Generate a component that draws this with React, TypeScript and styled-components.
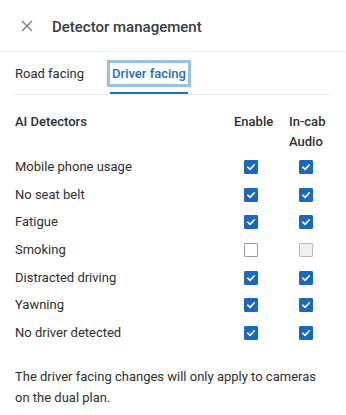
import React, { useState } from 'react';
import styled, { createGlobalStyle } from 'styled-components';

const GlobalStyle = createGlobalStyle`
  html, body {
    margin: 0;
    padding: 0;
    background: #ffffff;
  }
  body {
    font-family: Roboto, 'Liberation Sans', Arial, sans-serif;
    color: #2f2f2f;
    -webkit-font-smoothing: antialiased;
  }
`;

type Detector = {
  name: string;
  enable: boolean;
  audio: boolean;
  audioDisabled?: boolean;
};

const DETECTORS: Detector[] = [
  { name: 'Mobile phone usage', enable: true, audio: true },
  { name: 'No seat belt', enable: true, audio: true },
  { name: 'Fatigue', enable: true, audio: true },
  { name: 'Smoking', enable: false, audio: false, audioDisabled: true },
  { name: 'Distracted driving', enable: true, audio: true },
  { name: 'Yawning', enable: true, audio: true },
  { name: 'No driver detected', enable: true, audio: true },
];

const App = (): JSX.Element => {
  const [tab, setTab] = useState('driver');
  const [rows, setRows] = useState(DETECTORS);

  const toggle = (index: number, key: 'enable' | 'audio') => {
    setRows(
      rows.map((row, i) => (i === index ? { ...row, [key]: !row[key] } : row)),
    );
  };

  return (
    <>
      <GlobalStyle />
      <Panel>
        <Header>
          <CloseButton aria-label="Close">
            <svg width="12" height="12" viewBox="0 0 12 12">
              <path
                d="M1 1 L11 11 M11 1 L1 11"
                stroke="#7a7a7a"
                strokeWidth="1.3"
                fill="none"
              />
            </svg>
          </CloseButton>
          <Title>Detector management</Title>
        </Header>
        <Body>
          <TabList>
            <Tab active={tab === 'road'} onClick={() => setTab('road')}>
              <TabLabel>Road facing</TabLabel>
            </Tab>
            <Tab active={tab === 'driver'} onClick={() => setTab('driver')}>
              <TabLabel focused={tab === 'driver'}>Driver facing</TabLabel>
            </Tab>
          </TabList>

          <Table>
            <HeadCell>AI Detectors</HeadCell>
            <HeadCell>Enable</HeadCell>
            <HeadCell>In-cab Audio</HeadCell>
            {rows.map((row, i) => (
              <React.Fragment key={row.name}>
                <NameCell>{row.name}</NameCell>
                <BoxCell>
                  <Checkbox
                    checked={row.enable}
                    onClick={() => toggle(i, 'enable')}
                  >
                    {row.enable && <CheckMark />}
                  </Checkbox>
                </BoxCell>
                <BoxCell>
                  <Checkbox
                    checked={row.audio}
                    disabled={row.audioDisabled}
                    onClick={() => !row.audioDisabled && toggle(i, 'audio')}
                  >
                    {row.audio && <CheckMark />}
                  </Checkbox>
                </BoxCell>
              </React.Fragment>
            ))}
          </Table>

          <Note>
            The driver facing changes will only apply to cameras on the dual
            plan.
          </Note>
        </Body>
      </Panel>
    </>
  );
};

const CheckMark = () => (
  <svg width="10" height="10" viewBox="0 0 10 10">
    <path
      d="M1.8 5.2 L4.1 7.4 L8.3 2.8"
      stroke="#ffffff"
      strokeWidth="1.6"
      fill="none"
      strokeLinecap="round"
      strokeLinejoin="round"
    />
  </svg>
);

const Panel = styled.div`
  width: 346px;
  min-height: 415px;
  background: #ffffff;
`;

const Header = styled.div`
  display: flex;
  align-items: center;
  height: 52px;
  padding: 2px 0 0 21px;
  border-bottom: 1px solid #ececec;
  box-sizing: border-box;
`;

const CloseButton = styled.button`
  display: flex;
  align-items: center;
  justify-content: center;
  width: 12px;
  height: 12px;
  padding: 0;
  margin: 0 19px 1px 0;
  border: none;
  background: none;
  cursor: pointer;
`;

const Title = styled.h1`
  margin: 0;
  font-size: 15px;
  font-weight: 500;
  color: #3a3d42;
`;

const Body = styled.div`
  padding: 0 13px;
`;

const TabList = styled.div`
  display: flex;
  gap: 24px;
  border-bottom: 1px solid #ececec;
`;

const Tab = styled.button<{ active?: boolean }>`
  padding: 11px 0 8px;
  border: none;
  border-bottom: 2px solid ${(props) => (props.active ? '#1d6fc4' : 'transparent')};
  background: none;
  font-family: inherit;
  font-size: 13px;
  line-height: 21px;
  color: ${(props) => (props.active ? '#1d6fc4' : '#2f2f2f')};
  font-weight: ${(props) => (props.active ? 500 : 400)};
  cursor: pointer;
`;

const TabLabel = styled.span<{ focused?: boolean }>`
  display: block;
  padding: 0 2px;
  outline: ${(props) => (props.focused ? '3px solid #94c2ea' : 'none')};
`;

const Table = styled.div`
  display: grid;
  grid-template-columns: 1fr 38px 38px;
  grid-template-rows: 41px;
  grid-auto-rows: 27.7px;
  column-gap: 17px;
  margin-top: 17px;
  padding: 0 6px 0 2px;
  font-size: 13px;
`;

const HeadCell = styled.div`
  font-weight: 500;
  line-height: 20px;
  color: #2f2f2f;
`;

const NameCell = styled.div`
  display: flex;
  align-items: center;
  line-height: 20px;
  color: #2f2f2f;
`;

const BoxCell = styled.div`
  display: flex;
  align-items: center;
  padding-left: 10px;
`;

const Checkbox = styled.span<{ checked?: boolean; disabled?: boolean }>`
  display: flex;
  align-items: center;
  justify-content: center;
  width: 14px;
  height: 14px;
  box-sizing: border-box;
  border-radius: 1px;
  border: 1px solid
    ${(props) =>
      props.checked ? '#1b69bd' : props.disabled ? '#b9b9b9' : '#9d9d9d'};
  background: ${(props) =>
    props.checked ? '#1b69bd' : props.disabled ? '#efefef' : '#ffffff'};
  cursor: ${(props) => (props.disabled ? 'default' : 'pointer')};
`;

const Note = styled.p`
  margin: 19px 0 0 2px;
  font-size: 13px;
  line-height: 21px;
  color: #2f2f2f;
`;

export default App;
